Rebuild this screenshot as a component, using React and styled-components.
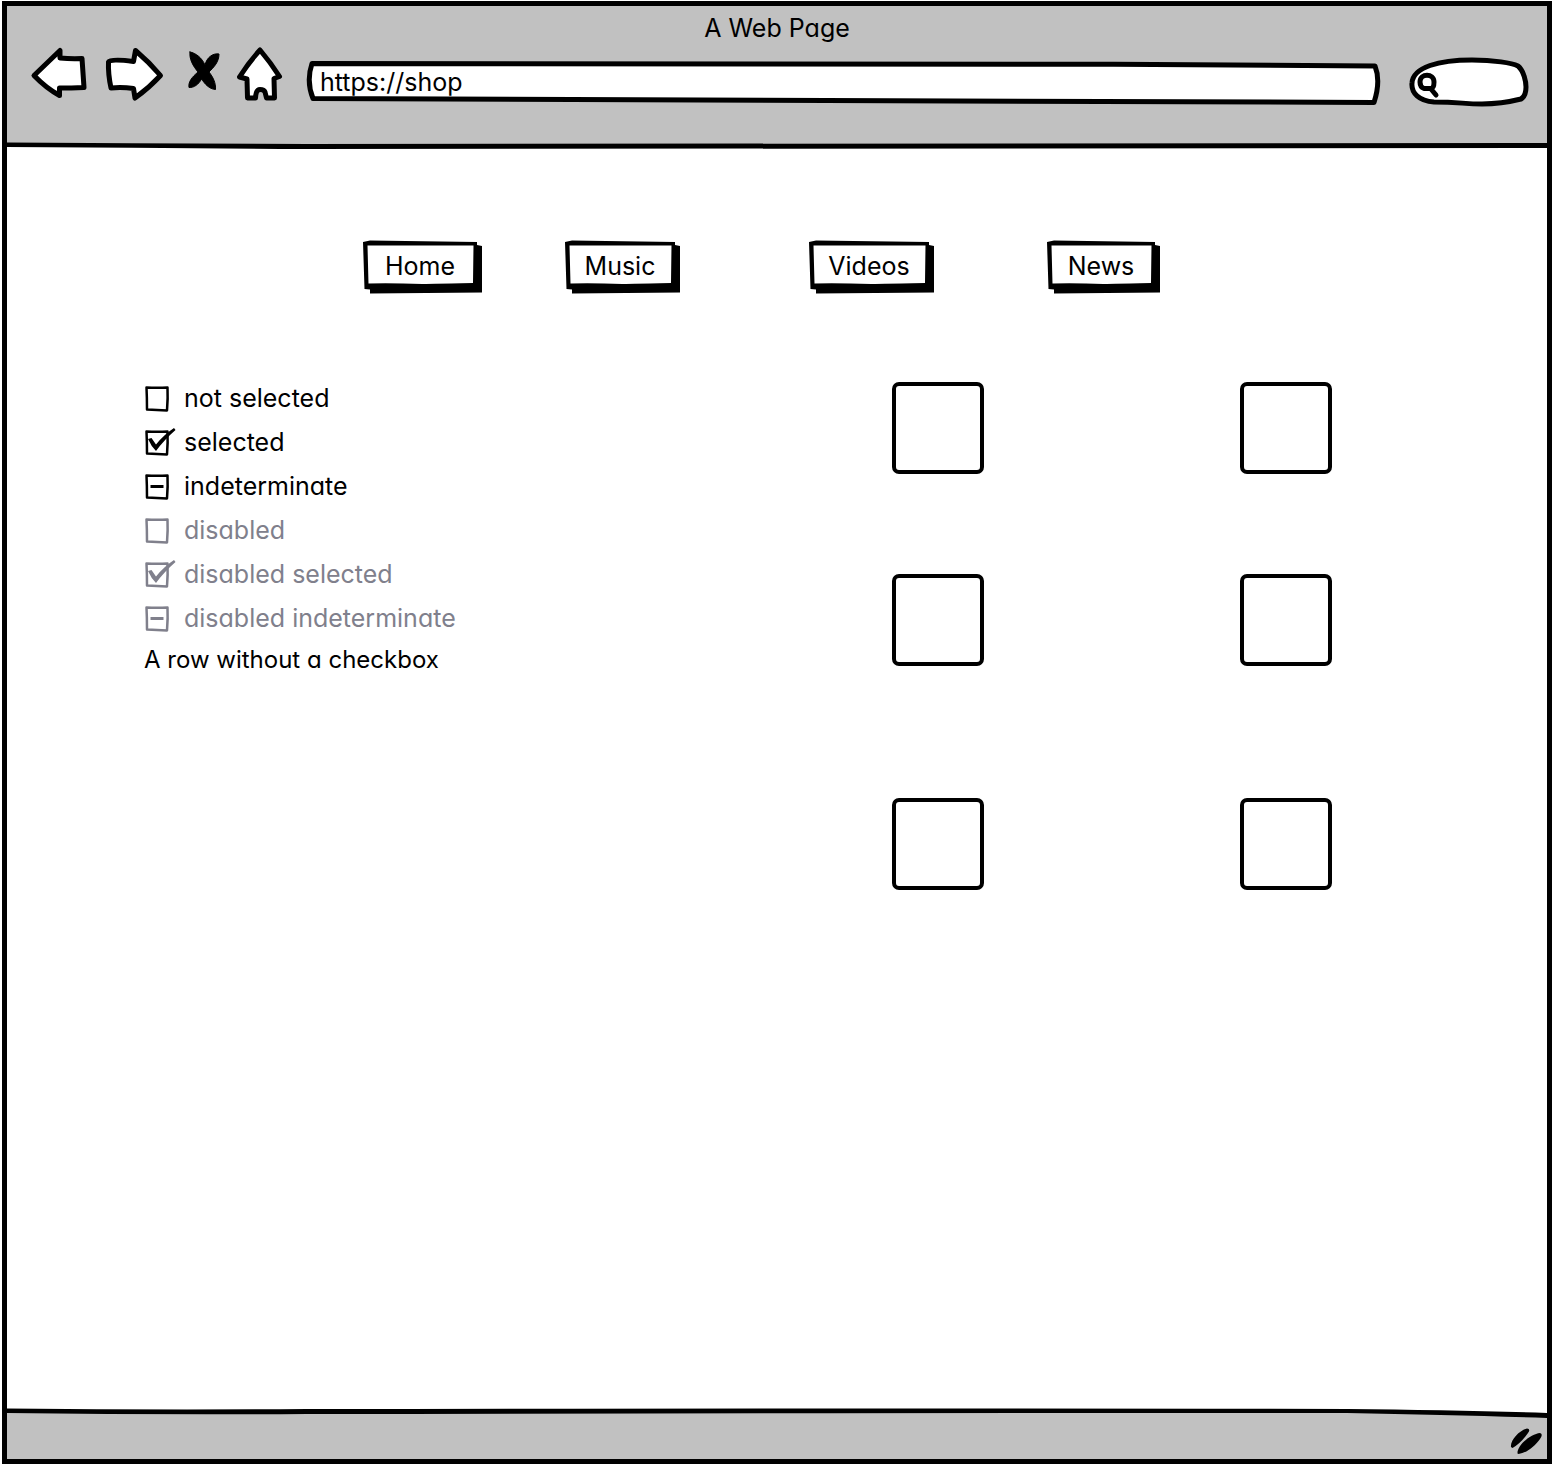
import React, { useEffect, useRef, useState } from "react";
import styled, { createGlobalStyle } from "styled-components";

const INK = "#000000";
const CHROME = "#c1c1c1";
const MUTED = "#80808c";

const GlobalStyle = createGlobalStyle`
  *, *::before, *::after { box-sizing: border-box; }
  body {
    margin: 0;
    background: #ffffff;
    color: ${INK};
    font-family: Inter, "Open Sans", sans-serif;
    font-feature-settings: "cv11";
    font-size: 25px;
    line-height: 32px;
  }
  button, input {
    font: inherit;
    font-feature-settings: inherit;
    color: inherit;
  }
`;

const Page = styled.div`
  display: flex;
  min-height: 100vh;
  padding: 1px 2px 2px;
`;

const BrowserWindow = styled.div`
  flex: 1;
  display: flex;
  flex-direction: column;
  border: 5px solid ${INK};
`;

const Chrome = styled.header`
  background: ${CHROME};
  padding-bottom: 32px;
`;

const Title = styled.h1`
  margin: 0;
  font-size: 25px;
  font-weight: 400;
  line-height: 44px;
  height: 40px;
  text-align: center;
`;

const Toolbar = styled.div`
  display: flex;
  align-items: flex-end;
  gap: 26px;
  height: 62px;
  padding: 0 18px 0 24px;
`;

const HistoryButtons = styled.div`
  display: flex;
  align-self: flex-start;
  gap: 16px;
`;

const IconButton = styled.button`
  width: ${({ $width }) => $width}px;
  height: 60px;
  padding: 0;
  border: 0;
  background: none;
  cursor: pointer;
`;

const IconArt = styled.svg`
  display: block;
  overflow: visible;
  fill: ${({ $solid }) => ($solid ? INK : "#ffffff")};
  stroke: ${INK};
  stroke-width: ${({ $solid }) => ($solid ? 1 : 5)}px;
  stroke-linejoin: round;
  stroke-linecap: round;
`;

const Field = styled.label`
  position: relative;
  display: flex;
  height: 52px;
  flex: ${({ $grow }) => ($grow ? "1 1 0" : "0 0 120px")};
  min-width: 0;
`;

const Backdrop = styled.svg`
  position: absolute;
  inset: 0;
  width: 100%;
  height: 100%;
  overflow: visible;
  fill: #ffffff;
  stroke: ${INK};
  stroke-width: 5px;
  stroke-linejoin: round;
  stroke-linecap: round;
  path { vector-effect: non-scaling-stroke; }
`;

const FieldInput = styled.input`
  position: relative;
  width: 100%;
  min-width: 0;
  padding: 0 14px 0 ${({ $inset }) => $inset}px;
  border: 0;
  outline: 0;
  background: transparent;
`;

const Rule = styled.svg`
  display: block;
  flex: none;
  width: 100%;
  height: ${({ $height }) => $height}px;
`;

const Main = styled.main`
  flex: 1;
  padding-top: 90px;
`;

const SiteNav = styled.nav`
  display: grid;
  grid-template-columns: 356fr 202fr 244fr 238fr 500fr;
  margin-bottom: 82px;
`;

const NavButton = styled.button`
  position: relative;
  width: ${({ $width }) => $width}px;
  height: 54px;
  padding: 0 5px 2px 0;
  border: 0;
  background: none;
  cursor: pointer;
  &:first-child { grid-column-start: 2; }
`;

const NavArt = styled.svg`
  position: absolute;
  inset: 0;
`;

const NavText = styled.span`
  position: relative;
`;

const Body = styled.div`
  display: grid;
  grid-template-columns: 137fr 748fr 655fr;
`;

const CheckList = styled.ul`
  grid-column: 2;
  margin: 0;
  padding: 0;
  list-style: none;
`;

const CheckRow = styled.label`
  display: flex;
  align-items: center;
  gap: 8px;
  height: 44px;
  color: ${({ $disabled }) => ($disabled ? MUTED : INK)};
`;

const CheckBox = styled.span`
  position: relative;
  width: 32px;
  height: 32px;
`;

const CheckInput = styled.input`
  position: absolute;
  inset: 0;
  width: 100%;
  height: 100%;
  margin: 0;
  appearance: none;
`;

const CheckArt = styled.svg`
  display: block;
  fill: none;
  stroke: currentColor;
  stroke-linejoin: round;
`;

const PlainRow = styled.li`
  font-size: 24px;
  line-height: 40px;
`;

const TileGrid = styled.div`
  display: grid;
  grid-template-columns: 348fr 307fr;
  grid-template-rows: 192px 224px 92px;
  padding-top: 6px;
`;

const Tile = styled.div`
  width: 92px;
  height: 92px;
  border: 4px solid ${INK};
  border-radius: 7px;
`;

const StatusBar = styled.footer`
  display: flex;
  justify-content: flex-end;
  height: 39px;
  padding: 6px 4px 0 0;
  background: ${CHROME};
`;

const historyIcons = [
  { name: "Back", width: 58, d: "M3 29.500L29 4.500V12Q40 13 51 12.500Q52 27 53 41.500Q40 42 28.500 42V49.500Q15 42 3 29.500Z" },
  { name: "Forward", width: 58, d: "M30.500 4.500Q44 16 55.500 29.500Q44 42 30 52L28.500 42.500Q17 41 6 42Q3 28 3.500 16Q5 12.500 28.500 15.500Z" },
  {
    name: "Stop",
    width: 40,
    solid: true,
    d: "M11 6C17 7 23 12 26 19C28 11 34 7 40 8C40 16 35 21 30 26C34 31 37 37 36.500 43.500C30 43 26 38 22.500 33C20 38 15 42 10 41.500C9 36 13 31 19 26C14 20 10 13 11 6Z",
  },
  {
    name: "Home",
    width: 46,
    d: "M25 4Q36 17 44.500 30.500L39 32.500L39.500 52H31.500L30 46Q29 43.500 25 43.500Q21 43.500 20.500 52H12.500L12 33L4.500 31Q14 16 25 4Z",
  },
];

const navItems = [
  { label: "Home", width: 119 },
  { label: "Music", width: 115 },
  { label: "Videos", width: 125 },
  { label: "News", width: 113 },
];

const checks = [
  { label: "not selected", state: "off" },
  { label: "selected", state: "on" },
  { label: "indeterminate", state: "mixed" },
  { label: "disabled", state: "off", disabled: true },
  { label: "disabled selected", state: "on", disabled: true },
  { label: "disabled indeterminate", state: "mixed", disabled: true },
];

function SketchButton({ label, width: w }) {
  return (
    <NavButton type="button" $width={w}>
      <NavArt width={w} height="54" aria-hidden="true">
        <path d={`M0 2L7 0.500L${w - 5} 2V5L${w} 6V52.500L7 53.500V49.500L1.500 49Z`} />
        <path fill="#fff" d={`M4.500 5.500H${w - 8.5}L${w - 9} 43Q${w / 2} 44 ${w / 2} 44Q30 43 5.500 43.500Z`} />
      </NavArt>
      <NavText>{label}</NavText>
    </NavButton>
  );
}

function CheckItem({ label, state: initial, disabled }) {
  const [state, setState] = useState(initial);
  const input = useRef(null);
  useEffect(() => {
    input.current.indeterminate = state === "mixed";
  }, [state]);
  return (
    <li>
      <CheckRow $disabled={disabled}>
        <CheckBox>
          <CheckInput
            ref={input}
            type="checkbox"
            checked={state === "on"}
            disabled={disabled}
            onChange={(e) => setState(e.target.checked ? "on" : "off")}
          />
          <CheckArt width="32" height="32" aria-hidden="true">
            <path strokeWidth="2.5" d="M2.500 5.500Q13 6 23.500 5.500Q24 16 23 28.500L3 27.500Q3 16 2.500 5.500Z" />
            {state === "on" && <path fill="currentColor" stroke="none" d="M4 13L7.500 12L12 18.500Q20 8.500 30 2L31.500 4Q20 14 12 25Q7 20 4 13Z" />}
            {state === "mixed" && <path strokeWidth="3" d="M6.500 16.500H19.500" />}
          </CheckArt>
        </CheckBox>
        {label}
      </CheckRow>
    </li>
  );
}

export default function App() {
  return (
    <Page>
      <GlobalStyle />
      <BrowserWindow>
        <Chrome>
          <Title>A Web Page</Title>
          <Toolbar>
            <HistoryButtons>
              {historyIcons.map(({ name, width, d, solid }) => (
                <IconButton key={name} type="button" aria-label={name} $width={width}>
                  <IconArt $solid={solid} width={width} height="60" aria-hidden="true">
                    <path d={d} />
                  </IconArt>
                </IconButton>
              ))}
            </HistoryButtons>
            <Field $grow>
              <Backdrop viewBox="0 0 1076 52" preserveAspectRatio="none" aria-hidden="true">
                <path d="M5 7.500C300 7 700 7 1068 10Q1074 25 1067 46.500C700 45 350 43 6 42.500Q-1 25 5 7.500Z" />
              </Backdrop>
              <FieldInput type="text" aria-label="Address" defaultValue="https://shop" $inset={13} />
            </Field>
            <Field>
              <Backdrop viewBox="0 0 120 52" aria-hidden="true">
                <path d="M3 27C4 11 30 4 63 4C85 4 103 7 109 10C115 15 117 26 117 31Q117 40 112 43C100 46 88 48 73 48C55 48 50 46 25 46C10 45 2 37 3 27Z" />
                <path d="M11 26C11 17 25 17 25 26Q25 32 22 32.500H15Q11 31 11 26ZM22 33L27 39" />
              </Backdrop>
              <FieldInput type="search" aria-label="Search" $inset={32} />
            </Field>
          </Toolbar>
        </Chrome>
        <Rule $height={10} viewBox="0 0 1540 10" preserveAspectRatio="none" aria-hidden="true">
          <path fill={CHROME} d="M0 0H1540V5H0Z" />
          <path d="M0 2.500Q150 3.500 300 4Q900 3.500 1540 3V8Q900 8.500 300 9Q150 8 0 7Z" />
        </Rule>
        <Main>
          <SiteNav>
            {navItems.map((item) => (
              <SketchButton key={item.label} {...item} />
            ))}
          </SiteNav>
          <Body>
            <CheckList>
              {checks.map((item) => (
                <CheckItem key={item.label} {...item} />
              ))}
              <PlainRow>A row without a checkbox</PlainRow>
            </CheckList>
            <TileGrid>
              {[1, 2, 3, 4, 5, 6].map((n) => (
                <Tile key={n} />
              ))}
            </TileGrid>
          </Body>
        </Main>
        <Rule $height={14} viewBox="0 0 1540 14" preserveAspectRatio="none" aria-hidden="true">
          <path fill={CHROME} d="M0 5Q150 6 300 5L1340 5L1540 9V14H0Z" />
          <path d="M0 2.500Q150 4 300 3Q900 2 1340 3Q1450 4 1540 7V12Q1450 9 1340 7Q900 7 300 8Q150 9 0 7Z" />
        </Rule>
        <StatusBar>
          <svg width="36" height="30" aria-hidden="true">
            <path d="M4 21C3 14 13 4 20 2.500Q24 3 21 7Q14 17 5.500 22ZM10.500 27.500C10 19 24 8 33 7Q36.500 8 33 13C28 20 20 27 11.500 28Z" />
          </svg>
        </StatusBar>
      </BrowserWindow>
    </Page>
  );
}
